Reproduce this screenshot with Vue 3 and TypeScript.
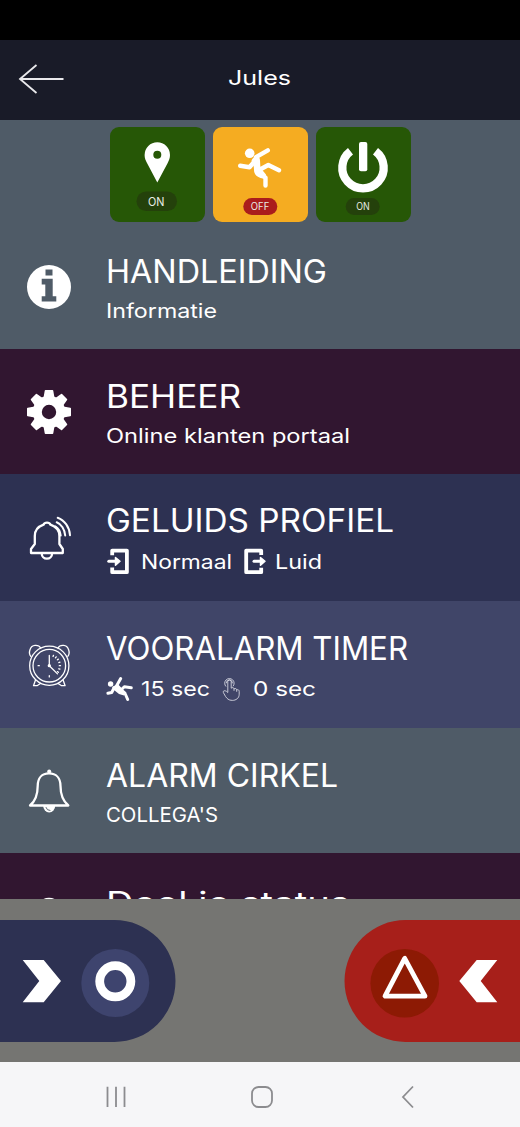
<script setup lang="ts">
interface Segment {
  icon?: 'enter' | 'exit' | 'fall' | 'touch'
  iconBox?: number
  text: string
  length: number
  box: number
}
interface Row {
  kind: 'info' | 'gear' | 'ringing' | 'clock' | 'bell' | 'share'
  title: string
  length: number
  tone: string
  segments: Segment[]
}

const rows: Row[] = [
  { kind: 'info', title: 'HANDLEIDING', length: 221, tone: 'slate first', segments: [{ text: 'Informatie', length: 111, box: 130 }] },
  { kind: 'gear', title: 'BEHEER', length: 135, tone: 'plum', segments: [{ text: 'Online klanten portaal', length: 244, box: 260 }] },
  {
    kind: 'ringing', title: 'GELUIDS PROFIEL', length: 288, tone: 'navy tall',
    segments: [
      { icon: 'enter', iconBox: 35, text: 'Normaal', length: 91, box: 102 },
      { icon: 'exit', iconBox: 32, text: 'Luid', length: 47, box: 60 },
    ],
  },
  {
    kind: 'clock', title: 'VOORALARM TIMER', length: 302, tone: 'indigo tall',
    segments: [
      { icon: 'fall', iconBox: 35, text: '15 sec', length: 69, box: 79 },
      { icon: 'touch', iconBox: 33, text: '0 sec', length: 63, box: 70 },
    ],
  },
  { kind: 'bell', title: 'ALARM CIRKEL', length: 232, tone: 'slate', segments: [{ text: "COLLEGA'S", length: 112, box: 130 }] },
  { kind: 'share', title: 'Deel je status', length: 244, tone: 'plum last', segments: [] },
]

const teeth = [0, 45, 90, 135, 180, 225, 270, 315]
const ticks = [22, 38, 54, 72, 90, 108, 126, 180, 270]
</script>

<template>
  <div class="phone">
    <div class="status-bar"></div>
    <header class="header">
      <svg class="back" width="50" height="34" viewBox="0 0 50 34">
        <path d="M1.5 17H45.5M18.5 3L2 17L18.5 31" />
      </svg>
      <svg class="heading" width="64" height="30">
        <text x="0" y="21" textLength="63" lengthAdjust="spacingAndGlyphs">Jules</text>
      </svg>
    </header>

    <main class="content">
      <div class="tiles">
        <svg class="tile green" width="95" height="95" viewBox="0 0 95 95">
          <path class="solid" fill-rule="evenodd" d="M47.3 15.3A12.7 12.7 0 0 1 60 28C60 31 59 33.5 57.7 36L47.3 55.5L37 36C35.6 33.5 34.6 31 34.6 28A12.7 12.7 0 0 1 47.3 15.3ZM47.3 23.8a4 4 0 1 0 0 8a4 4 0 1 0 0-8z" />
          <rect class="pill-on" x="26.5" y="64.5" width="40.5" height="19.5" rx="9.75" />
          <text class="small" x="38" y="79" font-size="11.5" textLength="16.5" lengthAdjust="spacingAndGlyphs">ON</text>
        </svg>
        <svg class="tile orange" width="95" height="95" viewBox="0 0 95 95">
          <circle class="solid" cx="36.7" cy="26.3" r="4.8" />
          <path class="limb" d="M54.8 23.3L43 30.2M41 35L36.5 40.2L27.2 38.8M48 42L55.3 38L66 43.3M47 47L52.5 50.5V58.5" />
          <path class="solid" d="M38.5 33.5C40 30.5 43.5 28 45.8 29.5C48 33 46.5 38 48 41.5L53 47.5L52 52L47.5 51C43 49.5 41 46.5 41 43C41 39 40 37 38.5 33.5Z" />
          <rect class="pill-off" x="30.3" y="71" width="34" height="17" rx="8.5" />
          <text class="small" x="37.8" y="83" font-size="9.7" textLength="18.5" lengthAdjust="spacingAndGlyphs">OFF</text>
        </svg>
        <svg class="tile green" width="95" height="95" viewBox="0 0 95 95">
          <path class="power" d="M34.5 24.2A20.7 20.7 0 1 0 59.5 24.2" />
          <rect class="solid" x="43" y="15" width="8.3" height="29.3" rx="2" />
          <rect class="pill-on" x="29.7" y="71" width="34" height="17" rx="8.5" />
          <text class="small" x="40.2" y="83" font-size="9.7" textLength="13.5" lengthAdjust="spacingAndGlyphs">ON</text>
        </svg>
      </div>

      <section v-for="row in rows" :key="row.title" class="row" :class="row.tone">
        <svg class="row-icon" width="98" height="60" viewBox="-49 -30 98 60">
          <path v-if="row.kind === 'info'" class="solid" fill-rule="evenodd" d="M0-22a22 22 0 1 0 0 44a22 22 0 1 0 0-44zM-3.5-17.5h7v6h-7zM-7.3-8.2H3.7V9.2H7.3V14.5H-7.3V9.2H-3.7V-2.5H-7.3z" />
          <g v-else-if="row.kind === 'gear'">
            <circle r="11.7" class="gear-body" />
            <path v-for="a in teeth" :key="a" class="tooth" :transform="`rotate(${a})`" d="M-4.7-14L-3.5-21.2H3.5L4.7-14Z" />
          </g>
          <g v-else-if="row.kind === 'ringing'" class="stroke">
            <path d="M-18 15V11L-14.2 6V-2C-14.2-8-10.5-11.5-5.5-13.3A3.7 3 0 0 1 1.5-13.3C6.5-11.5 10.4-8 10.4-2V6L13.8 11V15ZM-7.3 15.5A5.2 5.2 0 0 0 3.1 15.5" />
            <path class="waves" d="M8.7-20.3C15.5-18 20.7-10.5 21-2.7M7.7-15.7C12.2-14 15.8-8.5 16.2-2.5M6.5-11.5C9-10 11.3-6.5 11.7-2.5" />
          </g>
          <g v-else-if="row.kind === 'clock'" class="fine">
            <circle cx=".3" cy=".7" r="19.6" />
            <circle cx=".3" cy=".7" r="16.3" />
            <path d="M-18.2-8.7C-21-12-19-19.2-14-19.6C-11-19.9-9.3-18.8-8.3-17M18.8-8.7C21.6-12 19.6-19.2 14.6-19.6C11.6-19.9 9.9-18.8 8.9-17" />
            <path d="M-13.5 15L-15.5 20.7H-12L-8.5 18.5M14.1 15L16.1 20.7H12.6L9.1 18.5" />
            <path d="M.3-9.5V.7L8.5 8.9" />
            <path v-for="a in ticks" :key="a" :transform="`translate(.3 .7) rotate(${a})`" d="M0-11.2V-10" />
            <circle class="solid" cx=".3" cy=".7" r="1" />
          </g>
          <g v-else-if="row.kind === 'bell'" class="stroke">
            <path d="M-19 14.5C-13.5 10-11.3 4-11.3-5C-11.3-13-7-17.6 0-17.6C7-17.6 11.5-13 11.5-5C11.5 4 14 10 19.3 14.5Z" />
            <circle class="solid bare" cx=".2" cy="-19.5" r="2" />
            <path class="solid bare" d="M-5.8 15H6.2A6 6.5 0 0 1-5.8 15Z" />
            <path class="shade" d="M-3 16.5A4 4 0 0 0 1 19.5" />
          </g>
          <path v-else class="stroke" d="M-9-11.5A10 10 0 0 1 9-11.5" />
        </svg>
        <div class="row-text">
          <svg class="title" width="320">
            <text x="0" y="28" :textLength="row.length" lengthAdjust="spacingAndGlyphs">{{ row.title }}</text>
          </svg>
          <div class="details">
            <template v-for="seg in row.segments" :key="seg.text">
              <svg v-if="seg.icon" :width="seg.iconBox" height="30">
                <g v-if="seg.icon === 'enter'">
                  <path class="bracket" d="M6.2 7.3V2.6H20.9V24.2H6.2V19.5" />
                  <path class="arrow" d="M2.8 13.3H10" />
                  <path class="arrow-head" d="M9.5 9.5L14 13.3L9.5 17.2Z" />
                </g>
                <g v-else-if="seg.icon === 'exit'">
                  <path class="bracket" d="M18.2 7V2.6H3.2V24.2H18.2V19.8" />
                  <path class="arrow" d="M11 13.3H18" />
                  <path class="arrow-head" d="M17.5 9.5L22 13.3L17.5 17.2Z" />
                </g>
                <g v-else-if="seg.icon === 'fall'">
                  <circle class="solid" cx="4.6" cy="9" r="2.7" />
                  <path class="limb thin" d="M14.7 3.5L10.5 11M8 13L5.7 17.5L1.9 18.3M14.5 15.5L18.3 11.8L25.3 12.7M15 17L19.3 19L21.7 24.5" />
                  <path class="solid" d="M6 12L11.8 9L16.5 14L20.5 17.5L18 20.5L13 19L8 15Z" />
                </g>
                <g v-else class="hair">
                  <path d="M7.8 17.5V6.4A1.7 1.7 0 0 1 11.2 6.4V13.2C12.5 12 14 12.7 14 13.9C15.3 13 16.7 13.7 16.7 14.9C18 14.3 19.2 15 19.2 16.4V19.2C19.2 23.2 16 25.4 12.3 25.4C8.5 25.4 7 23.5 5.5 21.4L3.4 17.6C2.5 15.6 5.3 14.7 7.8 17.5Z" />
                  <path d="M6 11.5A4.7 4.7 0 1 1 13 11.3M6.3 8.3A3.1 3.1 0 1 1 12.5 8.3M14 13.9V15.8M16.7 14.9V16.8" />
                </g>
              </svg>
              <svg class="detail" :width="seg.box" height="30">
                <text x="0" y="21" :textLength="seg.length" lengthAdjust="spacingAndGlyphs">{{ seg.text }}</text>
              </svg>
            </template>
          </div>
        </div>
      </section>
    </main>

    <footer class="actions">
      <svg width="176" height="122" viewBox="0 0 176 122">
        <path class="navy-fill" d="M0 0H114.5A61 61 0 0 1 114.5 122H0Z" />
        <path class="solid" d="M22.7 40H43.7L61 61L43.7 82.3H22.7L39.3 61Z" />
        <circle class="knob-blue" cx="115.3" cy="63" r="34" />
        <circle class="ring" cx="115.3" cy="61.3" r="15.6" />
      </svg>
      <svg width="176" height="122" viewBox="0 0 176 122">
        <path class="red-fill" d="M176 0H61.5A61 61 0 0 0 61.5 122H176Z" />
        <circle class="knob-red" cx="60.7" cy="63.3" r="34.3" />
        <path class="triangle" d="M60.7 38.3L41 76.2H81Z" />
        <path class="solid" d="M153.3 40H132.7L115.3 61L132.7 82.3H153.3L136.7 61Z" />
      </svg>
    </footer>

    <nav class="system-nav">
      <svg width="22" height="24" viewBox="0 0 22 24"><path d="M2.5 1.8V22M11 1.8V22M19.5 1.8V22" /></svg>
      <svg class="home" width="24" height="24" viewBox="0 0 24 24"><rect x="2" y="2" width="20" height="20" rx="6.5" /></svg>
      <svg width="14" height="24" viewBox="0 0 14 24"><path d="M12 1.5L2 12L12 22.5" /></svg>
    </nav>
  </div>
</template>

<style>
body {
  margin: 0;
  background: #000;
}
</style>

<style scoped>
.phone {
  width: 520px;
  height: 1127px;
  display: flex;
  flex-direction: column;
  overflow: hidden;
  font-family: Inter, Roboto, "Liberation Sans", sans-serif;
}
svg {
  display: block;
  flex: none;
  fill: none;
  overflow: visible;
}
text {
  fill: #fff;
}
.status-bar {
  height: 40px;
  flex: none;
  background: #000;
}
.header {
  height: 80px;
  flex: none;
  box-sizing: border-box;
  padding-bottom: 2px;
  display: grid;
  grid-template-columns: 228px 64px 1fr;
  align-items: center;
  background: #191b28;
}
.back {
  margin-left: 18px;
}
.back path {
  stroke: #e9e9ec;
  stroke-width: 1.8px;
}
.heading {
  font-size: 20px;
}
.content {
  height: 779px;
  flex: none;
  overflow: hidden;
}
.tiles {
  height: 105px;
  box-sizing: border-box;
  padding-top: 7px;
  display: flex;
  justify-content: center;
  gap: 8px;
  background: #4f5b67;
}
.tile {
  border-radius: 9px;
}
.green {
  background: #265706;
}
.orange {
  background: #f5ac21;
}
.pill-on {
  fill: #24410b;
}
.pill-off {
  fill: #aa1c1c;
}
.small {
  fill: #e8ece4;
}
.solid {
  fill: #fff;
}
.limb {
  stroke: #fff;
  stroke-width: 4.4px;
  stroke-linecap: round;
  stroke-linejoin: round;
}
.limb.thin {
  stroke-width: 3px;
}
.power {
  stroke: #fff;
  stroke-width: 8.3px;
}
.row {
  height: 125px;
  display: flex;
  align-items: stretch;
}
.row.first {
  height: 124px;
}
.row.tall {
  height: 127px;
}
.row-icon {
  align-self: center;
}
.slate {
  background: #4f5b67;
}
.plum {
  background: #311630;
}
.navy {
  background: #2d3152;
}
.indigo {
  background: #404568;
}
.row-text {
  padding: 31px 0 0 8px;
}
.title {
  height: 42px;
  font-size: 32px;
}
.first .row-text,
.navy .row-text {
  padding-top: 30px;
}
.navy .title {
  height: 44px;
}
.indigo .title {
  height: 43px;
}
.last .row-text {
  padding-top: 33px;
}
.last .title {
  font-size: 31px;
}
.details {
  display: flex;
}
.detail {
  font-size: 20px;
}
.gear-body {
  stroke: #fff;
  stroke-width: 9px;
}
.tooth {
  fill: #fff;
  stroke: #fff;
  stroke-width: 1.6px;
  stroke-linejoin: round;
}
.stroke {
  stroke: #fff;
  stroke-width: 2.3px;
  stroke-linejoin: round;
  stroke-linecap: round;
}
.waves {
  stroke-width: 2px;
}
.bare {
  stroke: none;
}
.shade {
  stroke: #4f5b67;
  stroke-width: 0.9px;
}
.fine {
  stroke: #fff;
  stroke-width: 1.3px;
  stroke-linejoin: round;
  stroke-linecap: round;
}
.bracket {
  stroke: #fff;
  stroke-width: 3.8px;
  stroke-linejoin: round;
}
.arrow {
  stroke: #fff;
  stroke-width: 3px;
  stroke-linecap: round;
}
.arrow-head {
  fill: #fff;
  stroke: #fff;
  stroke-width: 1.5px;
  stroke-linejoin: round;
}
.hair {
  stroke: #d5d6e0;
  stroke-width: 0.9px;
}
.actions {
  height: 163px;
  flex: none;
  box-sizing: border-box;
  padding-top: 21px;
  display: flex;
  justify-content: space-between;
  align-items: flex-start;
  background: #757572;
}
.navy-fill {
  fill: #2d3152;
}
.red-fill {
  fill: #a71f1a;
}
.knob-blue {
  fill: #3e446e;
}
.knob-red {
  fill: #8d1a04;
}
.ring {
  stroke: #fff;
  stroke-width: 8.8px;
}
.triangle {
  stroke: #fff;
  stroke-width: 4.8px;
  stroke-linejoin: round;
}
.system-nav {
  height: 65px;
  flex: none;
  box-sizing: border-box;
  padding: 5px 105px 0;
  display: flex;
  justify-content: space-between;
  align-items: center;
  background: #f6f6f8;
}
.system-nav svg {
  stroke: #8c8c8f;
  stroke-width: 1.8px;
}
.system-nav .home {
  margin-left: -4px;
}
</style>
